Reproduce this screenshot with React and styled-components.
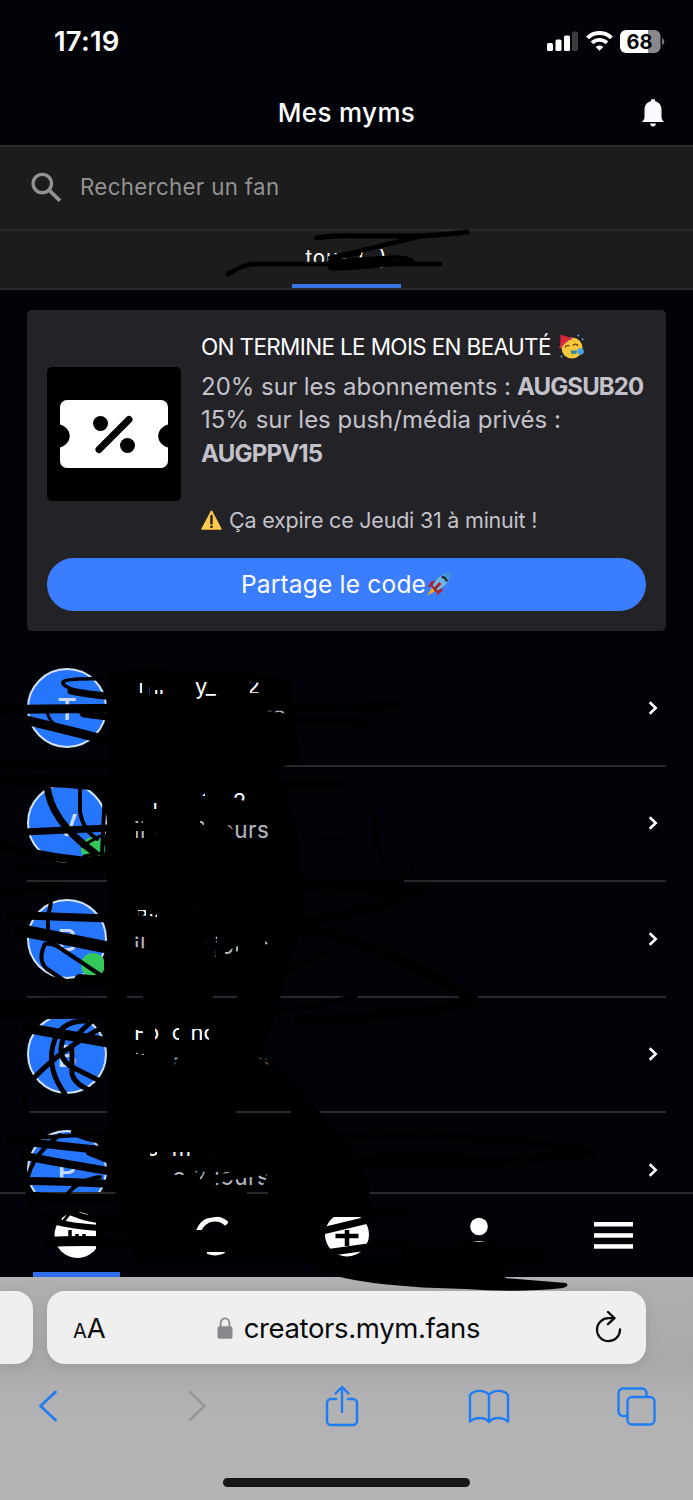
import React from 'react';
import styled, { createGlobalStyle } from 'styled-components';

const GlobalStyle=createGlobalStyle`
*{
  box-sizing: border-box;
}
body{
  margin: 0;
  background-color: #020308;
  font-family: Inter, "Liberation Sans", sans-serif;
}
svg{
  display: block;
  flex-shrink: 0;
}
`;

const Phone=styled.div`
position: relative;
width: 693px;
height: 1500px;
overflow: hidden;
display: flex;
flex-direction: column;
background-color: #020308;
color: #fff;
`;

const Text=styled.span`
display: block;
white-space: pre;
font-size: ${props=>props.$size}px;
font-weight: ${props=>props.$weight || 400};
color: ${props=>props.$color || "#fff"};
letter-spacing: ${props=>props.$space || 0}px;
line-height: ${props=>props.$line || 30}px;
`;

const StatusBar=styled.div`
height: 83px;
padding: 0 28px 1px 54px;
display: flex;
align-items: center;
justify-content: space-between;
`;
const StatusIcons=styled.div`
display: flex;
align-items: center;
gap: 7px;
`;

const Header=styled.header`
height: 64px;
padding: 0 27px 2px;
display: grid;
grid-template-columns: 26px 1fr 26px;
align-items: center;
justify-items: center;
border-bottom: 2px solid #2a2a2c;
`;

const Search=styled.div`
height: 84px;
padding: 0 0 2px 31px;
display: flex;
align-items: center;
gap: 18px;
background-color: #1c1c1c;
border-bottom: 2px solid #29292a;
`;

const Tabs=styled.div`
height: 59px;
display: flex;
justify-content: center;
background-color: #1c1c1c;
border-bottom: 2px solid #29292b;
`;
const Tab=styled.div`
width: 109px;
padding-top: 12px;
display: flex;
justify-content: center;
border-bottom: 4px solid #3974e0;
`;

const Card=styled.section`
margin: 20px 27px 0;
height: 321px;
padding: 20px 20px;
border-radius: 5px;
background-color: #232227;
`;
const CardBody=styled.div`
height: 227.5px;
display: flex;
gap: 20px;
`;
const Thumb=styled.div`
width: 134px;
height: 134px;
margin-top: 36.5px;
flex-shrink: 0;
border-radius: 5px;
background-color: #000;
display: flex;
align-items: center;
justify-content: center;
`;
const CardText=styled.div`
display: flex;
flex-direction: column;
`;
const Line=styled.div`
display: flex;
align-items: center;
height: ${props=>props.$height}px;
margin-top: ${props=>props.$top || 0}px;
gap: ${props=>props.$gap || 0}px;
`;
const ShareButton=styled.button`
width: 100%;
height: 53.5px;
border: none;
border-radius: 27px;
background-color: #3b7dff;
font-family: inherit;
display: flex;
align-items: center;
justify-content: center;
gap: 1px;
`;

const FanList=styled.div`
height: 541px;
padding: 0 27px;
margin-top: 20px;
overflow: hidden;
`;
const FanRow=styled.div`
height: 115.5px;
display: flex;
align-items: center;
border-bottom: 2px solid #29292d;
`;
const Avatar=styled.div`
position: relative;
width: 80px;
height: 80px;
border-radius: 50%;
border: 2px solid #d5e2fb;
background-color: #2675fd;
display: flex;
align-items: center;
justify-content: center;
padding-top: 3px;
`;
const Online=styled.i`
position: absolute;
right: 0;
bottom: 0;
width: 24px;
height: 24px;
border-radius: 50%;
background-color: #34c759;
`;
const FanInfo=styled.div`
flex: 1;
margin-left: 27px;
padding-bottom: 16px;
`;

const BottomNav=styled.nav`
height: 85px;
padding: 0 36px 0 33px;
display: flex;
justify-content: space-between;
border-top: 2px solid #29292d;
`;
const NavItem=styled.div`
width: 87px;
padding-top: 5px;
display: flex;
align-items: center;
justify-content: center;
border-bottom: 5px solid ${props=>props.$active ? "#2f6fed" : "transparent"};
`;

const Browser=styled.footer`
height: 223px;
padding-top: 14px;
background: linear-gradient(#b1b1b3, #a9a9ab 85px, #b2b2b4 125px, #b4b4b6);
display: flex;
flex-direction: column;
`;
const AddressRow=styled.div`
display: flex;
gap: 14px;
`;
const PreviousTab=styled.div`
width: 33px;
height: 73px;
border-radius: 0 18px 18px 0;
background-color: #efeff0;
box-shadow: 0 2px 14px rgba(0,0,0,0.1);
`;
const AddressBar=styled.div`
width: 599px;
height: 73px;
padding: 0 23px 0 26px;
border-radius: 18px;
background-color: #efeff0;
box-shadow: 0 2px 14px rgba(0,0,0,0.1);
display: flex;
align-items: center;
justify-content: space-between;
`;
const Url=styled.div`
display: flex;
align-items: center;
gap: 11px;
margin-right: 4px;
`;
const FontSize=styled.div`
display: flex;
align-items: baseline;
padding-top: 3px;
`;
const Toolbar=styled.div`
height: 84px;
padding: 0 27px 0 18px;
display: flex;
align-items: center;
justify-content: space-between;
`;
const ToolButton=styled.div`
width: 60px;
display: flex;
justify-content: center;
`;
const HomeIndicator=styled.div`
width: 247px;
height: 9px;
margin: 30px auto 0;
border-radius: 5px;
background-color: #171719;
`;
const Ink=styled.svg`
position: absolute;
top: 0;
left: 0;
pointer-events: none;
`;

const fans=[
  { letter: "T", name: "Tlii     y_     2", when: "                   to", online: false },
  { letter: "V", name: "   il      0   2", when: "il y a 2 jours", online: true },
  { letter: "B", name: "Bic      '", when: "il y a 2 jours", online: true },
  { letter: "B", name: "Fo  c nc", when: "il y a 2 jours", online: false },
  { letter: "P", name: "Fo  m     o", when: "il y a 2 jours", online: false },
];

const Signal=()=>(
  <svg width="32" height="20" viewBox="0 0 32 20" fill="#fff">
    <rect x="0" y="12" width="6" height="8" rx="1.6"/>
    <rect x="8.500" y="8.500" width="6" height="11.500" rx="1.6"/>
    <rect x="17" y="4.500" width="6" height="15.500" rx="1.6"/>
    <rect x="25" y="0.500" width="6" height="19.500" rx="1.6" fill="#3b3b3f"/>
  </svg>
);

const Wifi=()=>(
  <svg width="27" height="20" viewBox="0 0 27 20" fill="none" stroke="#fff" strokeWidth="3.900">
    <path d="M1.500 6.800C8 .300 19 .300 25.500 6.800"/>
    <path d="M6 11.900c4.300-4 10.700-4 15 0"/>
    <path d="M9.700 16c2.200-2 5.400-2 7.600 0L13.500 19.800z" fill="#fff" stroke="none"/>
  </svg>
);

const Battery=()=>(
  <svg width="45" height="23" viewBox="0 0 45 23">
    <path d="M6 0h22v23H6a6 6 0 0 1-6-6V6a6 6 0 0 1 6-6z" fill="#fff"/>
    <path d="M28 0h6.500a6 6 0 0 1 6 6v11a6 6 0 0 1-6 6H28z" fill="#88888b"/>
    <path d="M42 8c3 1 3 6 0 7z" fill="#77777a"/>
    <text x="19.500" y="18.700" textAnchor="middle" fontFamily="Inter, sans-serif" fontSize="20" fontWeight="700" fill="#08080a">68</text>
  </svg>
);

const Bell=()=>(
  <svg width="24" height="28" viewBox="0 0 24 28" fill="#fafafc">
    <path d="M12 0c1.400 0 2.200.9 2.200 2.200 4.200 1 6.300 4.400 6.300 8.800v6.500c0 2.500 1 4.300 2.800 5.500H.7c1.800-1.200 2.800-3 2.800-5.500V11c0-4.400 2.100-7.800 6.300-8.800C9.800.9 10.600 0 12 0z"/>
    <path d="M9.200 24.600h5.600a2.800 2.800 0 0 1-5.600 0z"/>
  </svg>
);

const SearchIcon=()=>(
  <svg width="31" height="30" viewBox="0 0 31 30" fill="none" stroke="#929292">
    <circle cx="11.300" cy="11.500" r="9.200" strokeWidth="3.300"/>
    <path d="M18.500 18.500l10.500 10.300" strokeWidth="3.800"/>
  </svg>
);

const Ticket=()=>(
  <svg width="108" height="68" viewBox="0 0 108 68">
    <path d="M7 0h94a7 7 0 0 1 7 7v17.500c-13 4-13 19 0 23V61a7 7 0 0 1-7 7H7a7 7 0 0 1-7-7V47.500c13-4 13-19 0-23V7a7 7 0 0 1 7-7z" fill="#fff"/>
    <circle cx="40.500" cy="23.500" r="7.500"/>
    <circle cx="67.500" cy="45.500" r="7.500"/>
    <path d="M39 49.500l30-30" stroke="#000" strokeWidth="7" strokeLinecap="round"/>
  </svg>
);

const Party=()=>(
  <svg width="25" height="25" viewBox="0 0 25 25">
    <circle cx="13" cy="14" r="10.500" fill="#f9c73e"/>
    <path d="M1 14L1.500.5 12 4z" fill="#d8213b"/>
    <path d="M1 14c3-5.500 7-9 12-10" stroke="#c73543" strokeWidth="2.500" fill="none"/>
    <path d="M6 13.500c1-2 3-2.500 4.500-1.500M14 11.500c1.500-2 4-1.500 5 .5" stroke="#78491c" strokeWidth="1.500" fill="none"/>
    <path d="M11.500 16.500h6.500l-1 3.500h-4.500z" fill="#33889c"/>
    <circle cx="21.500" cy="17.500" r="3.300" fill="#4aa2e0"/>
    <path d="M18.500 1l1.500 1M23 4.500l1 1.500M2 22l1 1" stroke="#6a9bd0" strokeWidth="1.800"/>
  </svg>
);

const Warning=()=>(
  <svg width="21" height="20" viewBox="0 0 21 20">
    <path d="M10.500 1.200L20 19H1z" fill="#fdca4b" stroke="#fdca4b" strokeWidth="1.500" strokeLinejoin="round"/>
    <path d="M10.500 6v7.500" stroke="#272524" strokeWidth="2.500" strokeLinecap="round"/>
    <circle cx="10.500" cy="16.800" r="1.400" fill="#272524"/>
  </svg>
);

const Rocket=()=>(
  <svg width="25" height="24" viewBox="0 0 25 24">
    <path d="M9 8.500L4 9.500.5 15l5-.500zM15.500 14.500v4.500L9.500 23.500l.5-5z" fill="#aa2634"/>
    <path d="M24 .5C17 1 11 4 5.500 13.500l5 5C18.500 14.500 22.500 9 24 .5z" fill="#70b8e3"/>
    <path d="M24 .5l-7 1.700 5.300 5.300z" fill="#3c91d1"/>
    <path d="M14.500 4.800Q18.500 4.500 20 9.500" stroke="#20364f" strokeWidth="2.700" fill="none"/>
    <path d="M5.500 13.500l5.500 5.500-3.500 1-3-3z" fill="#8c2636"/>
    <path d="M13.500 11l-6 6" stroke="#aa2634" strokeWidth="2.800"/>
    <path d="M5 15.500L0 23.500l8-4z" fill="#f5a927"/>
  </svg>
);

const Chevron=()=>(
  <svg width="27" height="14" viewBox="0 0 27 14" fill="none" stroke="#fff" strokeWidth="2.600">
    <path d="M10.700 1.200l6 5.800-6 5.800"/>
  </svg>
);

const MymIcon=()=>(
  <svg width="48" height="48" viewBox="0 0 48 48">
    <circle cx="24.500" cy="23" r="23" fill="#fff"/>
    <path d="M17 32V18M24 32V22M31 32V22" stroke="#000" strokeWidth="3.500"/>
  </svg>
);

const CoinIcon=()=>(
  <svg width="48" height="48" viewBox="0 0 48 48" fill="none" stroke="#fff" strokeWidth="5">
    <path d="M40 12A17 17 0 1 0 40 36"/>
    <path d="M3 18.500h26" strokeWidth="1"/>
  </svg>
);

const AddIcon=()=>(
  <svg width="48" height="48" viewBox="0 0 48 48">
    <circle cx="26" cy="22.500" r="22" fill="#fff"/>
    <path d="M26 18v16M14.500 24h23" stroke="#000" strokeWidth="4.500"/>
  </svg>
);

const UserIcon=()=>(
  <svg width="40" height="40" viewBox="0 0 40 40" fill="#fff">
    <circle cx="20" cy="10.500" r="8.800"/>
    <path d="M8 29c5-5 19-5 24 0v7H8z"/>
  </svg>
);

const MenuIcon=()=>(
  <svg width="39" height="27" viewBox="0 0 39 27" fill="#fff">
    <rect width="39" height="4.500"/>
    <rect y="11.200" width="39" height="4.500"/>
    <rect y="22.200" width="39" height="4.500"/>
  </svg>
);

const Lock=()=>(
  <svg width="16" height="22" viewBox="0 0 16 22">
    <path d="M3.600 10V6.500C3.600-.3 12.400-.3 12.400 6.500V10" fill="none" stroke="#88888c" strokeWidth="1.800"/>
    <rect x=".5" y="9.300" width="15" height="12.500" rx="2" fill="#88888c"/>
  </svg>
);

const Reload=()=>(
  <svg width="28" height="34" viewBox="0 0 28 34" fill="none" stroke="#0b0b0c" strokeWidth="2.300" strokeLinecap="round" strokeLinejoin="round">
    <path d="M18.500 7.200H14A11.500 11.500 0 1 0 25 18.500"/>
    <path d="M13 1l6.500 6.200-6.500 6"/>
  </svg>
);

const Arrow=({ flip, color })=>(
  <svg width="22" height="32" viewBox="0 0 22 32" fill="none" stroke={color} strokeWidth="2.700" strokeLinecap="round" strokeLinejoin="round">
    <path d={flip ? "M6 2l14.500 14L6 30" : "M18.500 2l-15 14 15 14"}/>
  </svg>
);

const Share=()=>(
  <svg width="34" height="42" viewBox="0 0 34 42" fill="none" stroke="#1f7cf4" strokeWidth="2.400" strokeLinecap="round" strokeLinejoin="round">
    <path d="M11 14H6a4 4 0 0 0-4 4v18a4 4 0 0 0 4 4h22a4 4 0 0 0 4-4V18a4 4 0 0 0-4-4h-5"/>
    <path d="M17 27V2M10.500 8.500L17 2l6.500 6.500"/>
  </svg>
);

const Book=()=>(
  <svg width="42" height="35" viewBox="0 0 42 35" fill="none" stroke="#1f7cf4" strokeWidth="2.400" strokeLinejoin="round">
    <path d="M21 6v27C17 28 8 27.500 2 32.500V6C6 .5 17 .5 21 6zM21 6v27c4-5 13-5.500 19-.5V6C36 .5 25 .5 21 6z"/>
  </svg>
);

const Windows=()=>(
  <svg width="39" height="39" viewBox="0 0 39 39" fill="none" stroke="#1f7cf4" strokeWidth="2.400">
    <path d="M10.500 29H6a4.500 4.500 0 0 1-4.500-4.500V6A4.500 4.500 0 0 1 6 1.500h19A4.500 4.500 0 0 1 29.500 6v4"/>
    <rect x="10.500" y="10" width="27" height="27.500" rx="4.500"/>
  </svg>
);

// Pen strokes that hide the names; the gaps in the filled block let bits of text through.
const Scribble=()=>(
  <Ink width="693" height="1500" viewBox="0 0 693 1500" fill="none" stroke="#000" strokeLinecap="round" strokeLinejoin="round">
    <path strokeWidth="5" d="M317 238Q335 235 360 236L422 236Q445 235 467 232"/>
    <path strokeWidth="4.500" d="M422 236L330 258"/>
    <path strokeWidth="4.500" d="M228 274Q245 263 260 264H440"/>
    <path strokeWidth="5" d="M331 268Q365 268 412 261Q405 257 390 258L330 262z"/>
    <path strokeWidth="2.500" d="M334 265L392 261M334 259L360 254"/>
    <path fill="#000" stroke="none" fillRule="evenodd" d="M107 672L150 667L235 678L290 684L300 762L278 768L290 810L300 850L303 920L290 965L278 1005L262 1050L310 1100L330 1125L352 1150L368 1180L372 1211L330 1216L322 1228L322 1262H135L122 1225L117 1195L107 1180z
      M138 683h4v10h-4z M147 687h3v7h-3z M155 690h9v4h-9z M167 686h9v3h-9z M195 682h13v18h-13z M208 692h14v6h-14z M225 681h7v3h-7z M250 676h16v17h-16z M267 708l22 2v4l-22-3z
      M150 803h8v7h-8z M197 793h8v3h-8z M232 792h15v13l-5-5h-10z M135 821h8v3h-8z M136 831h8v7h-8z M154 829l3 5h-3z M200 821h4v4h-4z M225 823h46v16l-40 0 3-8z
      M138 910h8v8h-8z M149 914h8v3h-8z M195 907h5v5h-5z M134 935h12v20h-12z M205 939l3 2v7h-3z M213 935h4v7h-4z M214 950h2v7h-2z M225 952l13-6v5q-8 5-13 3z M265 941h4v5h-4z M127 994h16v6h-16z M213 994h24v6h-24z
      M135 1030h8v10h-8z M155 1028h6v12h-6z M172 1028h7v12h-7z M190 1029h12v11h-12z M203 1029h6v11h-6z M136 1051h9v4h-9z M173 1057l6 1-5 7z M259 1058l9 1v6l-4-4z M236 1110h55v6h-55z
      M150 1152h7v4h-7z M170 1152h20v4h-20z M208 1154h10v3h-10z M174 1171h11v4h-11z M195 1171l10 1-4 8z M214 1171h56l-7 14h-49z M247 1191h21v4h-21z
      M190 1230l6-9Q215 1216 228 1216v14z M207 1252h18v4h-18z"/>
    <path strokeWidth="3.500" d="M104 679Q67 678 63 682Q61 686 80 692"/>
    <path strokeWidth="7" d="M71 691Q100 697 180 702"/>
    <path strokeWidth="9" d="M0 710Q60 708 200 708M25 720Q55 727 110 741M84 713L180 725"/>
    <path strokeWidth="3" d="M47 712Q49 722 60 728"/>
    <path strokeWidth="8" d="M150 706Q280 708 396 705M120 735Q270 716 365 722M120 678Q200 670 286 682"/>
    <path strokeWidth="9" d="M0 767Q120 760 210 767M0 778Q70 780 200 784H345M20 783Q80 780 150 796"/>
    <path strokeWidth="7" d="M47 784Q49 820 95 853M25 832L150 826"/>
    <path strokeWidth="4" d="M80 787V812Q83 830 97 839M105 790L102 854"/>
    <path strokeWidth="3" d="M82 846l18-10M84 856l18-3"/>
    <path strokeWidth="8" d="M0 846Q55 860 120 864M20 870H140M250 882L400 882M0 892Q30 888 60 888M200 884Q330 888 420 891M10 915L150 920"/>
    <path strokeWidth="12" d="M20 930L150 956"/>
    <path strokeWidth="4" d="M50 890Q53 900 48 915L48 933M45 944Q37 960 47 969L68 983M45 944Q53 943 60 948L108 980M106 958V982"/>
    <path strokeWidth="10" d="M0 1005Q60 1000 140 1005M0 1015Q60 1013 160 1014M27 1028L150 1050M270 926Q360 918 425 887M280 927Q360 930 475 1001Q420 1016 300 1020"/>
    <path strokeWidth="5" d="M65 1094Q47 1070 53 1045Q60 1020 86 1021M33 1079Q60 1050 105 1026M65 1035Q55 1055 70 1066L100 1081M72 1048V1074Q75 1085 92 1091M78 1034L92 1021"/>
    <path strokeWidth="3" d="M292 816Q303 840 340 839Q350 838 363 818Q379 806 374 832Q379 860 402 873Q412 877 411 866"/>
    <path strokeWidth="5" d="M260 985Q300 965 328 951M260 1012Q310 1010 355 996"/>
    <path strokeWidth="12" d="M80 980Q95 983 120 978M92 862L120 860"/>
    <path strokeWidth="4" d="M25 1095Q24 1120 45 1135M35 1138Q130 1130 250 1134M60 1135Q25 1160 27 1190Q30 1215 60 1220M66 1196Q77 1180 100 1177"/>
    <path strokeWidth="8" d="M10 1140Q60 1146 120 1152M25 1156Q60 1163 120 1173M90 1152l30 12M26 1181Q60 1181 110 1184M75 1132Q90 1140 120 1142M250 1146Q430 1122 590 1152Q470 1172 200 1160M210 1180Q400 1146 495 1162"/>
    <path strokeWidth="9" d="M30 1196Q60 1200 130 1198M130 1212Q270 1202 410 1214"/>
    <path strokeWidth="6" d="M50 1220Q70 1228 150 1231M68 1211Q90 1222 128 1222"/>
    <path strokeWidth="3" d="M63 1222L72 1210"/>
    <path strokeWidth="10" d="M48 1242Q80 1240 130 1242"/>
    <path strokeWidth="7" d="M318 1232L372 1219M318 1254L375 1246M370 1245H410"/>
    <path strokeWidth="6" d="M322 1214H368M99 1216V1252"/>
    <path strokeWidth="18" d="M410 1256H535"/>
    <path fill="#000" stroke="none" d="M300 1258H515L505 1278L566 1283Q570 1286 563 1288Q520 1293 465 1289Q375 1287 332 1275z M461 1242H498V1260H461z"/>
  </Ink>
);

function App() {
  return (
    <Phone>
      <GlobalStyle/>
      <StatusBar>
        <Text $size={27.5} $weight={600} $space={0.2}>17:19</Text>
        <StatusIcons>
          <Signal/>
          <Wifi/>
          <Battery/>
        </StatusIcons>
      </StatusBar>
      <Header>
        <span/>
        <Text $size={26} $weight={500} $space={0.35}>Mes myms</Text>
        <Bell/>
      </Header>
      <Search>
        <SearchIcon/>
        <Text $size={22.3} $color="#929292" $space={0.33}>Rechercher un fan</Text>
      </Search>
      <Tabs>
        <Tab>
          <Text $size={20.5} $space={0.9}>tous (  )</Text>
        </Tab>
      </Tabs>
      <Card>
        <CardBody>
          <Thumb><Ticket/></Thumb>
          <CardText>
            <Line $height={33} $gap={8}>
              <Text $size={22.5} $space={-0.65}>ON TERMINE LE MOIS EN BEAUTÉ</Text>
              <Party/>
            </Line>
            <Line $height={33.5} $top={7} $gap={6}>
              <Text $size={24} $color="#c3c2ca">20% sur les abonnements :</Text>
              <Text $size={24} $color="#c3c2ca" $weight={700} $space={-0.9}>AUGSUB20</Text>
            </Line>
            <Line $height={33.5}>
              <Text $size={24} $color="#c3c2ca">15% sur les push/média privés :</Text>
            </Line>
            <Line $height={33.5}>
              <Text $size={24} $color="#c3c2ca" $weight={700} $space={-0.8}>AUGPPV15</Text>
            </Line>
            <Line $height={30} $top={34} $gap={7}>
              <Warning/>
              <Text $size={21.5} $color="#c3c2ca" $space={-0.22}>Ça expire ce Jeudi 31 à minuit !</Text>
            </Line>
          </CardText>
        </CardBody>
        <ShareButton>
          <Text $size={24.5} $space={0.2}>Partage le code</Text>
          <Rocket/>
        </ShareButton>
      </Card>
      <FanList>
        {fans.map((fan, i)=>(
          <FanRow key={i}>
            <Avatar>
              <Text $size={30} $weight={500} $color="#c9dcff">{fan.letter}</Text>
              {fan.online && <Online/>}
            </Avatar>
            <FanInfo>
              <Text $size={22} $line={29}>{fan.name}</Text>
              <Text $size={22.5} $line={27} $color="#b9b9bd" $space={0.55}>{fan.when}</Text>
            </FanInfo>
            <Chevron/>
          </FanRow>
        ))}
      </FanList>
      <BottomNav>
        <NavItem $active><MymIcon/></NavItem>
        <NavItem><CoinIcon/></NavItem>
        <NavItem><AddIcon/></NavItem>
        <NavItem><UserIcon/></NavItem>
        <NavItem><MenuIcon/></NavItem>
      </BottomNav>
      <Browser>
        <AddressRow>
          <PreviousTab/>
          <AddressBar>
            <FontSize>
              <Text $size={20} $color="#0b0b0c">A</Text>
              <Text $size={27.5} $color="#0b0b0c">A</Text>
            </FontSize>
            <Url>
              <Lock/>
              <Text $size={27.5} $color="#0b0b0c" $space={-0.35}>creators.mym.fans</Text>
            </Url>
            <Reload/>
          </AddressBar>
        </AddressRow>
        <Toolbar>
          <ToolButton><Arrow color="#1f7cf4"/></ToolButton>
          <ToolButton><Arrow flip color="#98989a"/></ToolButton>
          <ToolButton><Share/></ToolButton>
          <ToolButton><Book/></ToolButton>
          <ToolButton><Windows/></ToolButton>
        </Toolbar>
        <HomeIndicator/>
      </Browser>
      <Scribble/>
    </Phone>
  );
}

export default App;
